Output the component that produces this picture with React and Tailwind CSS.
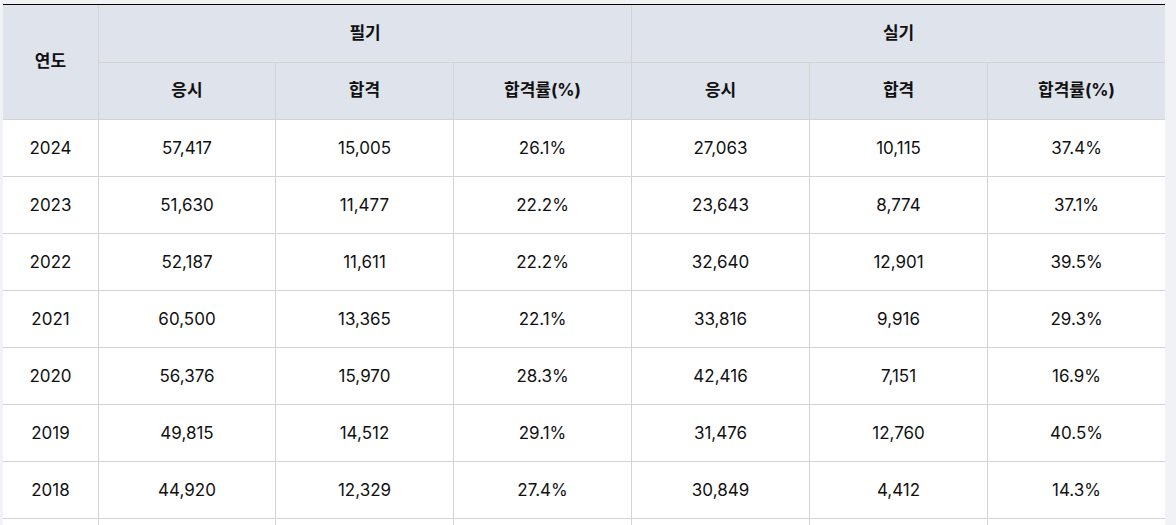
const rows = [
  ["2024", "57,417", "15,005", "26.1%", "27,063", "10,115", "37.4%"],
  ["2023", "51,630", "11,477", "22.2%", "23,643", "8,774", "37.1%"],
  ["2022", "52,187", "11,611", "22.2%", "32,640", "12,901", "39.5%"],
  ["2021", "60,500", "13,365", "22.1%", "33,816", "9,916", "29.3%"],
  ["2020", "56,376", "15,970", "28.3%", "42,416", "7,151", "16.9%"],
  ["2019", "49,815", "14,512", "29.1%", "31,476", "12,760", "40.5%"],
  ["2018", "44,920", "12,329", "27.4%", "30,849", "4,412", "14.3%"],
  ["", "", "", "", "", "", ""],
];

const subHeads = ["응시", "합격", "합격률(%)", "응시", "합격", "합격률(%)"];

export default function App() {
  return (
    <div
      className="min-h-screen bg-[#f1f2f6] pl-[3px] pt-[4px] text-[#111111]"
      style={{ fontFamily: "Inter, 'Noto Sans CJK KR', sans-serif" }}
    >
      <table className="w-[1162px] table-fixed border-separate border-spacing-0 border-t border-black bg-white text-[17px]">
        <colgroup>
          <col className="w-[96px]" />
          <col className="w-[177px]" />
          <col className="w-[178px]" />
          <col className="w-[178px]" />
          <col className="w-[178px]" />
          <col className="w-[178px]" />
          <col className="w-[177px]" />
        </colgroup>
        <thead>
          <tr className="h-[58px]">
            <th rowSpan={2} className="border-b border-r border-[#d3d3d3] bg-[#dfe3eb] font-bold">
              연도
            </th>
            <th colSpan={3} className="border-b border-r border-[#d3d3d3] bg-[#dfe3eb] font-bold">
              필기
            </th>
            <th colSpan={3} className="border-b border-[#d3d3d3] bg-[#dfe3eb] font-bold">
              실기
            </th>
          </tr>
          <tr className="h-[57px]">
            {subHeads.map((h, i) => (
              <th
                key={i}
                className={`border-b border-[#d3d3d3] bg-[#dfe3eb] font-bold ${i < 5 ? "border-r" : ""}`}
              >
                {h}
              </th>
            ))}
          </tr>
        </thead>
        <tbody>
          {rows.map((r, ri) => (
            <tr key={ri} className="h-[57px]">
              {r.map((c, i) => (
                <td
                  key={i}
                  className={`border-b border-[#d3d3d3] pt-[2px] text-center ${i < 6 ? "border-r" : ""}`}
                >
                  {c}
                </td>
              ))}
            </tr>
          ))}
        </tbody>
      </table>
    </div>
  );
}
